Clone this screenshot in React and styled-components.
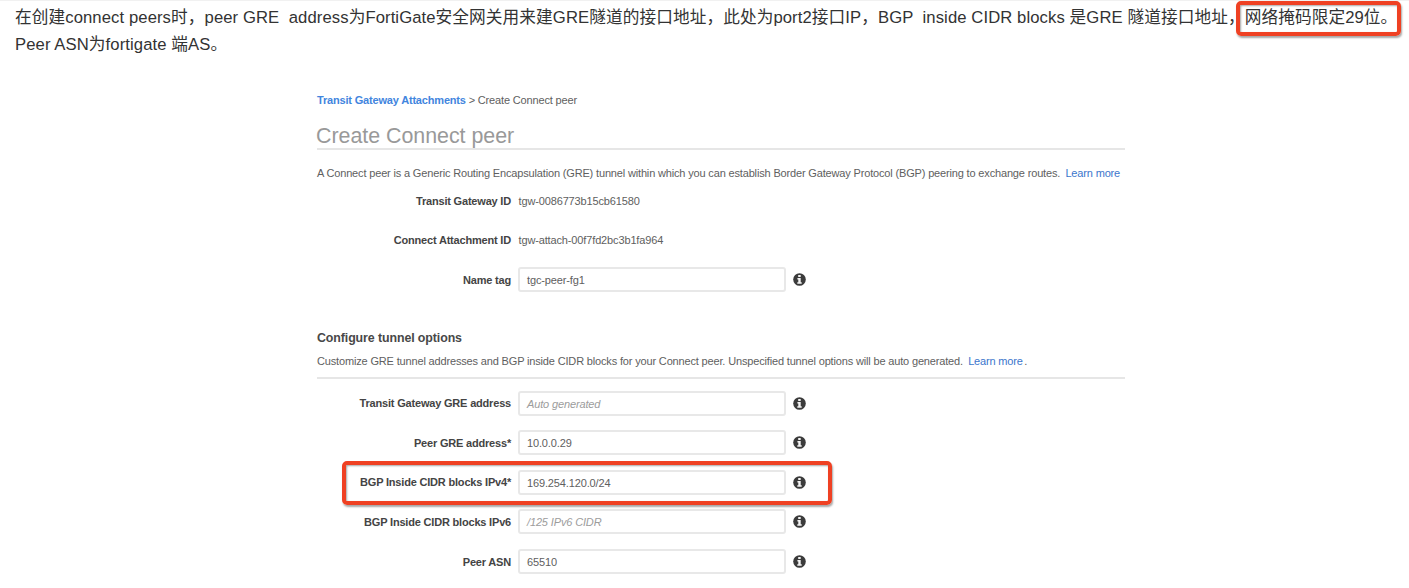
import React from 'react';
import styled, { createGlobalStyle } from 'styled-components';

const Global = createGlobalStyle`
  * { box-sizing: border-box; }
  html, body { margin: 0; padding: 0; background: #fff; }
`;

const Page = styled.main`
  width: 1409px;
  height: 588px;
  overflow: hidden;
  background: #fff;
  border-top: 1px solid #f1f1f1;
  padding-left: 15px;
  font-family: 'Liberation Sans', 'Noto Sans CJK SC', sans-serif;
`;

const Intro = styled.p`
  margin: 0;
  padding-top: 3px;
  height: 87px;
  font-size: 16.67px;
  line-height: 27px;
  letter-spacing: 0.09px;
  color: #333;
  white-space: pre;
`;

const Line = styled.span`
  display: block;
`;

const Marked = styled.span`
  position: relative;
`;

const Frame = styled.span`
  position: absolute;
  border: 4px solid #ef4123;
  border-radius: 5px;
  box-shadow: 1px 2px 2px rgba(0, 0, 0, 0.35), inset 1px 1px 2px rgba(0, 0, 0, 0.35);
  pointer-events: none;
`;

const TextFrame = styled(Frame)`
  left: -8.5px;
  top: -7px;
  width: 165px;
  height: 35px;
`;

const RowFrame = styled(Frame)`
  left: 25px;
  top: -2px;
  width: 490px;
  height: 44px;
`;

const Console = styled.section`
  width: 808px;
  margin-left: 302px;
  font-size: 11px;
  letter-spacing: -0.16px;
  color: #606060;
`;

const Breadcrumb = styled.nav`
  height: 25px;
  line-height: 24px;
  white-space: pre;
`;

const Crumb = styled.a`
  font-weight: bold;
  color: #4285de;
  letter-spacing: -0.18px;
`;

const Title = styled.h1`
  margin: 0;
  height: 37px;
  padding-top: 7px;
  border-bottom: 2px solid #e6e6e6;
  font-size: 21.4px;
  line-height: 32px;
  font-weight: normal;
  letter-spacing: -0.02px;
  text-indent: -1px;
  color: #999;
`;

const Text = styled.p`
  margin: 0;
  height: ${(p) => p.$height}px;
  line-height: 24px;
  padding-top: ${(p) => p.$top || 0}px;
  white-space: pre;
`;

const Link = styled.a`
  margin-left: -0.6px;
  margin-right: 1.5px;
  color: #3b76cc;
`;

const Subtitle = styled.h2`
  margin: 0;
  height: 22px;
  line-height: 23px;
  font-size: 12.4px;
  letter-spacing: -0.1px;
  color: #484848;
`;

const Rule = styled.hr`
  margin: 0;
  height: 2px;
  border: 0;
  background: #e6e6e6;
`;

const Rows = styled.div`
  padding-top: ${(p) => p.$top || 0}px;
  height: ${(p) => p.$height}px;
`;

const Row = styled.div`
  position: relative;
  display: grid;
  grid-template-columns: 194px 268px 14px;
  column-gap: 7px;
  align-items: center;
  height: 39.6px;
`;

const Label = styled.label`
  text-align: right;
  font-weight: bold;
  color: #444;
  white-space: nowrap;
  letter-spacing: -0.19px;
`;

const Value = styled.span`
  white-space: nowrap;
  letter-spacing: -0.14px;
  padding-left: 0.5px;
`;

const Field = styled.div`
  height: 25px;
  padding-left: 7px;
  border: 2px solid #e8e8e8;
  border-radius: 3px;
  line-height: 22px;
  white-space: nowrap;
  font-style: ${(p) => (p.$hint ? 'italic' : 'normal')};
  color: ${(p) => (p.$hint ? '#9c9c9c' : '#606060')};
  letter-spacing: -0.14px;
`;

const Icon = styled.svg`
  display: block;
  width: 13px;
  height: 13px;
`;

const Info = () => (
  <Icon viewBox="0 0 13 13">
    <circle cx="6.5" cy="6.5" r="6.3" fill="#3b3b3b" />
    <path d="M5.2 2.1h2.5v1.9H5.2zM4.4 4.900h3.300v4.300h1v1.500H4.300V9.200h1V6.400h-.9z" fill="#f4f4f4" />
  </Icon>
);

const ids = [
  { label: 'Transit Gateway ID', value: 'tgw-0086773b15cb61580' },
  { label: 'Connect Attachment ID', value: 'tgw-attach-00f7fd2bc3b1fa964' },
];

const options = [
  { label: 'Transit Gateway GRE address', value: 'Auto generated', hint: true },
  { label: 'Peer GRE address*', value: '10.0.0.29' },
  { label: 'BGP Inside CIDR blocks IPv4*', value: '169.254.120.0/24', framed: true },
  { label: 'BGP Inside CIDR blocks IPv6', value: '/125 IPv6 CIDR', hint: true },
  { label: 'Peer ASN', value: '65510' },
];

const FieldRow = ({ label, value, hint, framed }) => (
  <Row>
    <Label>{label}</Label>
    <Field $hint={hint}>{value}</Field>
    <Info />
    {framed && <RowFrame />}
  </Row>
);

export default function App() {
  return (
    <>
      <Global />
      <Page>
        <Intro>
          <Line>
            在创建connect peers时，peer GRE  address为FortiGate安全网关用来建GRE隧道的接口地址，此处为port2接口IP，BGP  inside CIDR blocks 是GRE 隧道接口地址，
            <Marked>
              网络掩码限定29位。
              <TextFrame />
            </Marked>
          </Line>
          <Line>Peer ASN为fortigate 端AS。</Line>
        </Intro>
        <Console>
          <Breadcrumb>
            <Crumb>Transit Gateway Attachments</Crumb>
            {' > Create Connect peer'}
          </Breadcrumb>
          <Title>Create Connect peer</Title>
          <Text $height={31} $top={11}>
            {'A Connect peer is a Generic Routing Encapsulation (GRE) tunnel within which you can establish Border Gateway Protocol (BGP) peering to exchange routes.  '}
            <Link>Learn more</Link>
          </Text>
          <Rows $height={146}>
            {ids.map((r) => (
              <Row key={r.label}>
                <Label>{r.label}</Label>
                <Value>{r.value}</Value>
              </Row>
            ))}
            <FieldRow label="Name tag" value="tgc-peer-fg1" />
          </Rows>
          <Subtitle>Configure tunnel options</Subtitle>
          <Text $height={28}>
            {'Customize GRE tunnel addresses and BGP inside CIDR blocks for your Connect peer. Unspecified tunnel options will be auto generated.  '}
            <Link>Learn more</Link>
            .
          </Text>
          <Rule />
          <Rows $top={4.4} $height={210}>
            {options.map((r) => (
              <FieldRow key={r.label} {...r} />
            ))}
          </Rows>
        </Console>
      </Page>
    </>
  );
}
